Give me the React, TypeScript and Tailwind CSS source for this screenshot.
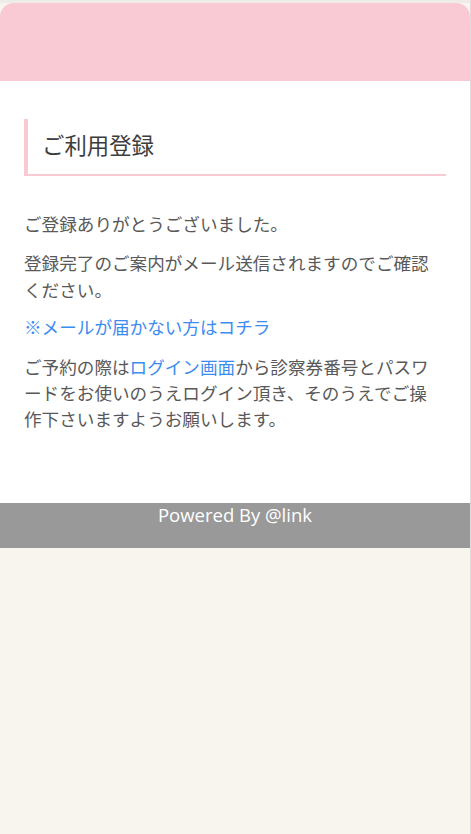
export default function App() {
  return (
    <div
      className="min-h-[834px] w-full bg-[#f8f5ef] border-r border-t-[3px] border-t-[#eeece8] border-r-[#dddddd]"
      style={{ fontFamily: '"Noto Sans CJK JP", "Noto Sans", sans-serif' }}
    >
      {/* Header */}
      <header className="h-[78px] rounded-t-[14px] bg-[#f9c9d4]" />

      {/* Content */}
      <main className="bg-white px-6 pt-[38px] pb-[70px]">
        <h1 className="border-l-4 border-b-2 border-[#f9c9d4] pt-[9px] pb-[13px] pl-[14px] text-[22.4px] leading-[33px] font-normal text-[#3d3d3d]">
          ご利用登録
        </h1>

        <div className="mt-[35px] pr-[4px] text-[17.6px] leading-[26.4px] text-[#595959]">
          <p className="mb-[13px]">ご登録ありがとうございました。</p>
          <p className="mb-[11px]">登録完了のご案内がメール送信されますのでご確認ください。</p>
          <p className="mb-[13px]">
            <a href="#" className="text-[#3b8cf0]">※メールが届かない方はコチラ</a>
          </p>
          <p>
            ご予約の際は<a href="#" className="text-[#3b8cf0]">ログイン画面</a>から診察券番号とパスワードをお使いのうえログイン頂き、そのうえでご操作下さいますようお願いします。
          </p>
        </div>
      </main>

      {/* Footer */}
      <footer className="h-[45px] bg-[#999999] text-center">
        <span
          className="text-[18.5px] leading-[24px] text-white"
          style={{ fontFamily: '"Open Sans", "Liberation Sans", sans-serif' }}
        >
          Powered By @link
        </span>
      </footer>
    </div>
  );
}
